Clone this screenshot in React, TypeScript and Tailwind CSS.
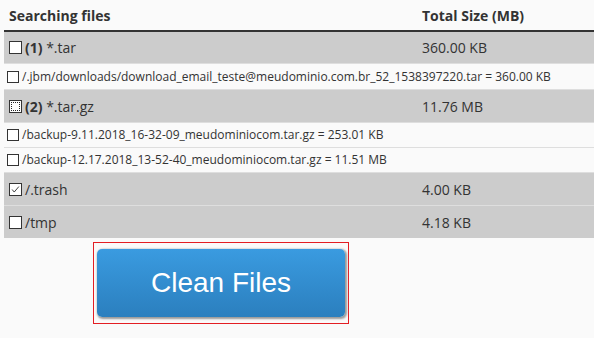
import { clsx } from "clsx";

type Row =
  | { kind: "group"; num?: string; label: string; size: string; checked?: boolean; focus?: boolean }
  | { kind: "file"; label: string };

const rows: Row[] = [
  { kind: "group", num: "(1)", label: "*.tar", size: "360.00 KB" },
  { kind: "file", label: "/.jbm/downloads/download_email_teste@meudominio.com.br_52_1538397220.tar = 360.00 KB" },
  { kind: "group", num: "(2)", label: "*.tar.gz", size: "11.76 MB", focus: true },
  { kind: "file", label: "/backup-9.11.2018_16-32-09_meudominiocom.tar.gz = 253.01 KB" },
  { kind: "file", label: "/backup-12.17.2018_13-52-40_meudominiocom.tar.gz = 11.51 MB" },
  { kind: "group", label: "/.trash", size: "4.00 KB", checked: true },
  { kind: "group", label: "/tmp", size: "4.18 KB" }
];

function Box({ size, checked, focus }: { size: "lg" | "sm"; checked?: boolean; focus?: boolean }) {
  return (
    <span
      className={clsx(
        "relative inline-block shrink-0 border border-[#333] bg-white",
        size === "lg" ? "h-[13px] w-[13px]" : "h-[12px] w-[12px]",
        focus && "outline-1 outline-dotted outline-offset-[-3px] outline-[#222]"
      )}
    >
      {checked && (
        <svg viewBox="0 0 13 13" className="absolute inset-0 h-full w-full">
          <path d="M2.5 6.5 L5 9.5 L10.5 3" fill="none" stroke="#333" strokeWidth="1.1" />
        </svg>
      )}
    </span>
  );
}

export default function App() {
  return (
    <div className="min-h-[338px] w-[594px] bg-[#fafafa] font-['Open_Sans',sans-serif] text-[#333]">
      <div className="pl-[4px]">
        <div className="grid h-[32px] grid-cols-[413px_1fr] items-center border-b-2 border-[#333] text-[14px] font-bold">
          <span className="pl-[5px]">Searching files</span>
          <span className="pl-[5px]">Total Size (MB)</span>
        </div>
        {rows.map((row, i) =>
          row.kind === "group" ? (
            <div
              key={i}
              className={clsx(
                "grid grid-cols-[413px_1fr] items-center bg-[#cccccc] text-[14px]",
                i === 0 ? "h-[31px]" : "h-[33px] border-t border-[#dedede]"
              )}
            >
              <span className="flex items-center gap-[3px] pl-[5px]">
                <Box size="lg" checked={row.checked} focus={row.focus} />
                <span>
                  {row.num && <b>{row.num} </b>}
                  {row.label}
                </span>
              </span>
              <span className="pl-[5px]">{row.size}</span>
            </div>
          ) : (
            <div
              key={i}
              className={clsx(
                "flex items-center gap-[3px] border-t border-[#dedede] pl-[3px] text-[12px]",
                i === 1 ? "h-[26px]" : "h-[25px]"
              )}
            >
              <Box size="sm" />
              <span>{row.label}</span>
            </div>
          )
        )}
      </div>
      <div className="ml-[93px] mt-[4px] w-[256px] border border-[#e31e24] px-[3px] py-[6px]">
        <button
          type="button"
          className="flex h-[68px] w-full items-center justify-center rounded-[5px] bg-gradient-to-b from-[#3a9be0] to-[#2b7fbe] font-['Liberation_Sans',Arial,sans-serif] text-[28px] text-white shadow-[1px_1px_2px_1px_#9a9a9a]"
        >
          Clean Files
        </button>
      </div>
    </div>
  );
}
